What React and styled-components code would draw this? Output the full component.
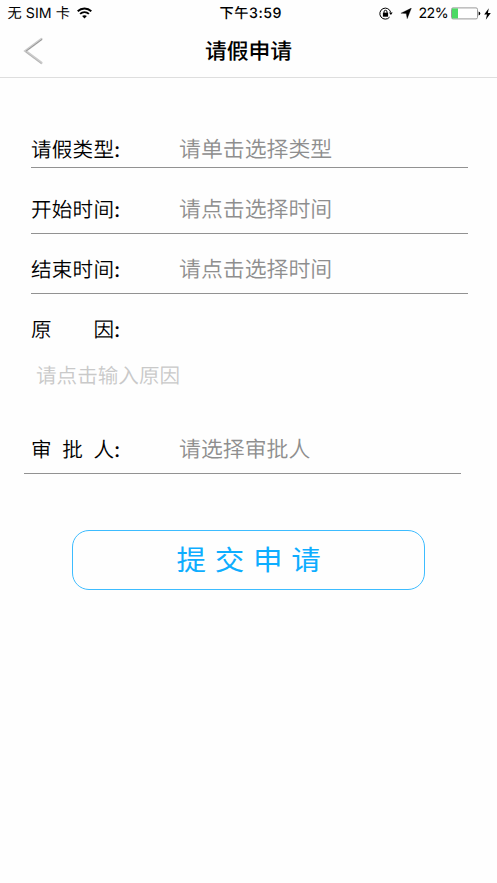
import styled, { createGlobalStyle } from "styled-components";

const GlobalStyle = createGlobalStyle`
  * {
    box-sizing: border-box;
  }

  body {
    margin: 0;
    background: #fefefe;
    color: #000;
    font-family: "Inter", "Noto Sans CJK SC", sans-serif;
    text-rendering: geometricPrecision;
  }
`;

const Screen = styled.div`
  min-height: 883px;
  background: #fefefe;
`;

const StatusBar = styled.div`
  display: grid;
  grid-template-columns: 1fr auto 1fr;
  align-items: center;
  height: 25px;
  padding: 0 6px 0 7.5px;
  font-size: 14.2px;
  line-height: 26px;
  white-space: nowrap;

  span {
    padding-top: 1px;
  }

  .carrier {
    display: flex;
    align-items: center;
    gap: 7px;
    letter-spacing: 0.05px;
  }

  .time {
    padding: 1px 0 0 3px;
    font-weight: 500;
    letter-spacing: 0.5px;
  }

  .indicators {
    display: flex;
    align-items: center;
    justify-content: flex-end;
  }

  .wifi {
    margin-bottom: 2px;
  }

  .location {
    margin-left: 7px;
  }

  .percent {
    margin: 0 3px 0 7px;
    letter-spacing: -0.6px;
  }

  .bolt {
    margin-left: 3px;
  }

  svg {
    display: block;
    flex: none;
  }
`;

const Header = styled.header`
  display: grid;
  grid-template-columns: 60px 1fr 60px;
  align-items: center;
  height: 53px;
  border-bottom: 1px solid #dedede;

  h1 {
    margin: 0;
    padding-top: 2px;
    font-size: 21.8px;
    font-weight: 500;
    line-height: 50px;
    text-align: center;
  }
`;

const BackButton = styled.button`
  width: 60px;
  height: 50px;
  padding: 0 0 0 22px;
  border: 0;
  background: none;

  svg {
    display: block;
  }
`;

const Form = styled.form`
  padding: 56px 29px 0 31px;
`;

const Field = styled.div`
  display: grid;
  grid-template-columns: 148px 1fr;
  margin-top: ${({ $top }) => $top || 0}px;
  padding-bottom: ${({ $bottom = 7 }) => $bottom}px;
  border-bottom: 1px solid ${({ $plain }) => ($plain ? "transparent" : "#929292")};
  line-height: 32px;
`;

const ApproverField = styled(Field)`
  margin-left: -7px;
  margin-right: 7px;
  padding-left: 7px;
`;

const Label = styled.label`
  font-size: 20.6px;
  font-weight: 350;
  white-space: pre;

  .name {
    display: inline-flex;
    justify-content: space-between;
    width: 83px;
  }

  .colon {
    font-weight: 500;
  }
`;

const Value = styled.span`
  color: #8e8e8e;
  font-size: 21.9px;
  font-weight: 350;
`;

const Reason = styled.div`
  height: 74px;
  padding-left: 5px;
  color: #c9c9c9;
  font-size: 20.6px;
  font-weight: 350;
  line-height: 32px;
`;

const SubmitButton = styled.button`
  display: block;
  width: 353px;
  height: 60px;
  margin: 56px 0 0 41px;
  padding: 0 0 3px 9px;
  border: 1px solid #3dbcff;
  border-radius: 17px;
  background: #fefefe;
  color: #0dadff;
  font-family: "Noto Sans CJK SC", sans-serif;
  font-size: 29.5px;
  line-height: 55px;
  letter-spacing: 8.7px;

  span {
    display: block;
    transform: scaleY(0.93);
  }
`;

const WifiIcon = () => (
  <svg className="wifi" width="15" height="12" viewBox="0 0 15 12" fill="none" stroke="#000" strokeWidth="1.9">
    <path d="M0.7 4.2C4.5 0.5 10.5 0.5 14.3 4.2" />
    <path d="M3.1 6.9C5.6 4.5 9.4 4.5 11.9 6.9" />
    <path d="M5.1 9.1C6.4 7.9 8.6 7.9 9.9 9.1L7.5 11.5Z" fill="#000" stroke="none" />
  </svg>
);

const RotationLockIcon = () => (
  <svg width="14" height="13" viewBox="0 0 14 13" fill="none" stroke="#000">
    <path d="M11.7 5.4A5.5 5.5 0 1 0 10.6 10.1" strokeWidth="1" />
    <path d="M10 5.5H13.7L11.9 7.9Z" fill="#000" stroke="none" />
    <rect x="3.9" y="5.7" width="5.2" height="4" fill="#000" stroke="none" />
    <path d="M5 6V4.9A1.5 1.6 0 0 1 8 4.9V6" strokeWidth="1" />
  </svg>
);

const LocationIcon = () => (
  <svg className="location" width="12" height="11" viewBox="0 0 12 11">
    <path d="M11.4 0.1L7.2 10.7L6.2 5.6L0.9 5.2Z" stroke="#000" strokeWidth="0.3" />
  </svg>
);

const BatteryIcon = () => (
  <svg width="30" height="13" viewBox="0 0 30 13">
    <rect x="0.5" y="0.9" width="26" height="11" rx="1.5" fill="#fff" stroke="#999" />
    <path d="M1 1.4H7V11.4H1Z" fill="#4cd964" />
    <path d="M27.6 4.4Q29.3 5.1 29.3 6.4T27.6 8.4Z" />
  </svg>
);

const BoltIcon = () => (
  <svg className="bolt" width="7" height="12" viewBox="0 0 7 12">
    <path d="M4.8 0.3L0.2 6.6H3L1.8 11.7L6.8 5H3.9Z" />
  </svg>
);

const BackIcon = () => (
  <svg width="22" height="28" viewBox="0 0 22 28" fill="none" strokeLinecap="round">
    <path d="M19.3 2.2L3.5 14L19.3 25.8" stroke="#cbcbcb" strokeWidth="2.6" />
    <path d="M19.8 2.5L4.2 14" stroke="#969696" strokeWidth="1" />
    <path d="M4 15.1L19 26.3" stroke="#adadad" strokeWidth="0.7" />
  </svg>
);

const FieldLabel = ({ name }) => (
  <Label>
    <span className="name">
      {[...name].map((char) => (
        <span key={char}>{char}</span>
      ))}
    </span>
    <span className="colon">:</span>
  </Label>
);

const LeaveRequest = () => {
  return (
    <Screen>
      <GlobalStyle />
      <StatusBar>
        <div className="carrier">
          <span>无 SIM 卡</span>
          <WifiIcon />
        </div>
        <div className="time">下午3:59</div>
        <div className="indicators">
          <RotationLockIcon />
          <LocationIcon />
          <span className="percent">22%</span>
          <BatteryIcon />
          <BoltIcon />
        </div>
      </StatusBar>
      <Header>
        <BackButton type="button">
          <BackIcon />
        </BackButton>
        <h1>请假申请</h1>
      </Header>
      <Form>
        <Field $bottom={1}>
          <FieldLabel name="请假类型" />
          <Value>请单击选择类型</Value>
        </Field>
        <Field $top={26}>
          <FieldLabel name="开始时间" />
          <Value>请点击选择时间</Value>
        </Field>
        <Field $top={20}>
          <FieldLabel name="结束时间" />
          <Value>请点击选择时间</Value>
        </Field>
        <Field $top={20} $bottom={13} $plain>
          <FieldLabel name="原因" />
        </Field>
        <Reason>请点击输入原因</Reason>
        <ApproverField>
          <FieldLabel name="审批人" />
          <Value>请选择审批人</Value>
        </ApproverField>
        <SubmitButton type="button">
          <span>提交申请</span>
        </SubmitButton>
      </Form>
    </Screen>
  );
};

export default LeaveRequest;
